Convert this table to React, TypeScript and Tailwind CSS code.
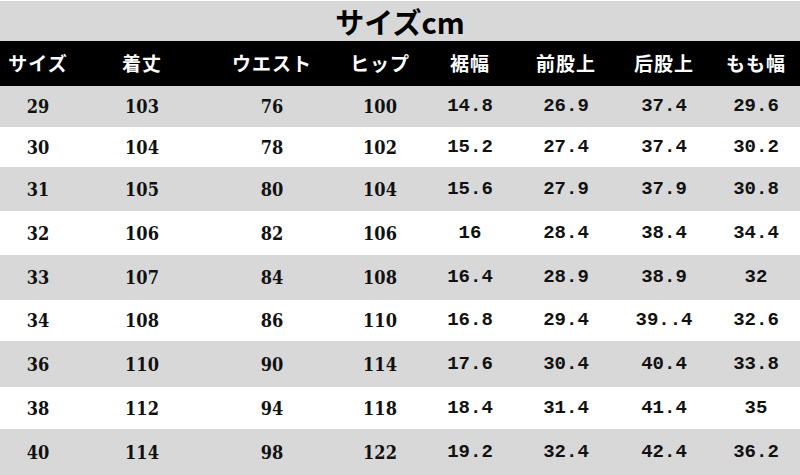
import React from 'react';

const COLS = ['w-[76px]', 'w-[132px]', 'w-[128px]', 'w-[88px]', 'w-[92px]', 'w-[100px]', 'w-[96px]', 'w-[88px]'];

const HEADERS = ['サイズ', '着丈', 'ウエスト', 'ヒップ', '裾幅', '前股上', '后股上', 'もも幅'];

const ROWS: { h: string; cells: string[] }[] = [
  { h: 'h-[41px]', cells: ['29', '103', '76', '100', '14.8', '26.9', '37.4', '29.6'] },
  { h: 'h-[40px]', cells: ['30', '104', '78', '102', '15.2', '27.4', '37.4', '30.2'] },
  { h: 'h-[44px]', cells: ['31', '105', '80', '104', '15.6', '27.9', '37.9', '30.8'] },
  { h: 'h-[44px]', cells: ['32', '106', '82', '106', '16', '28.4', '38.4', '34.4'] },
  { h: 'h-[45px]', cells: ['33', '107', '84', '108', '16.4', '28.9', '38.9', '32'] },
  { h: 'h-[41px]', cells: ['34', '108', '86', '110', '16.8', '29.4', '39..4', '32.6'] },
  { h: 'h-[46px]', cells: ['36', '110', '90', '114', '17.6', '30.4', '40.4', '33.8'] },
  { h: 'h-[42px]', cells: ['38', '112', '94', '118', '18.4', '31.4', '41.4', '35'] },
  { h: 'h-[46px]', cells: ['40', '114', '98', '122', '19.2', '32.4', '42.4', '36.2'] },
];

const serifNum =
  "font-['DejaVu_Serif_Condensed','DejaVu_Serif',serif] font-stretch-condensed font-bold text-[18px] text-[#111]";
const monoNum = "font-['Liberation_Mono',monospace] font-bold text-[19px] text-[#111]";

export default function App() {
  return (
    <div className="w-[800px] h-[475px] overflow-hidden bg-white flex flex-col">
      <div className="mt-px h-[40px] bg-[#d8d8d8] flex items-center justify-center">
        <span className="font-['Noto_Sans_CJK_JP',sans-serif] font-bold text-[29px] leading-none text-black">
          サイズcm
        </span>
      </div>
      <div className="h-[45px] bg-black flex">
        {HEADERS.map((label, i) => (
          <div key={label} className={`${COLS[i]} flex items-center justify-center`}>
            <span className="font-['Noto_Sans_CJK_JP',sans-serif] font-bold text-[19px] tracking-[1px] text-white">
              {label}
            </span>
          </div>
        ))}
      </div>
      {ROWS.map((row, r) => (
        <div key={r} className={`${row.h} flex ${r % 2 === 0 ? 'bg-[#d8d8d8]' : 'bg-white'}`}>
          {row.cells.map((cell, i) => (
            <div key={i} className={`${COLS[i]} flex items-center justify-center`}>
              <span className={i < 4 ? serifNum : monoNum}>{cell}</span>
            </div>
          ))}
        </div>
      ))}
    </div>
  );
}
